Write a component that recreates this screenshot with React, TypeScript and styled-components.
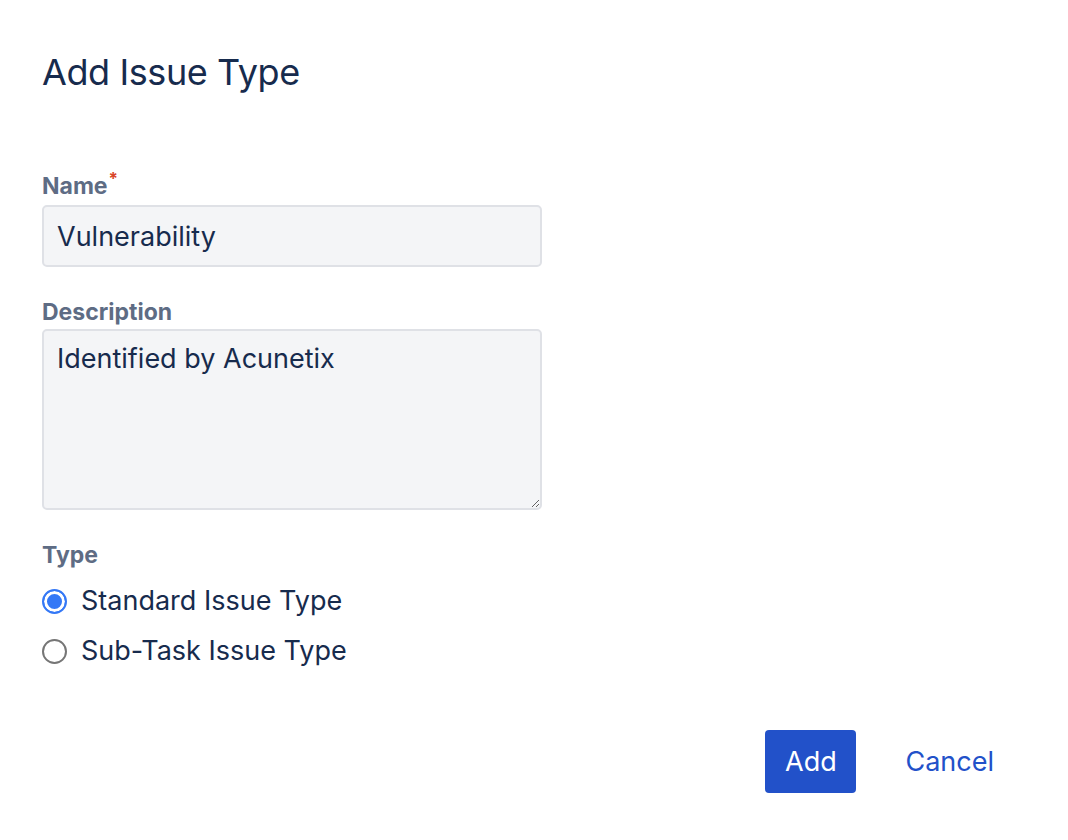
import React, { useState } from 'react';
import styled, { createGlobalStyle } from 'styled-components';

const GlobalStyle = createGlobalStyle`
  html, body {
    margin: 0;
    padding: 0;
    background: #fff;
  }
  body {
    font-family: Inter, 'Noto Sans', 'Liberation Sans', sans-serif;
    color: #172b4d;
  }
`;

const Page = styled.div`
  width: 1068px;
  height: 840px;
  box-sizing: border-box;
  padding: 48px 42px 0 42px;
`;

const Title = styled.h1`
  margin: 0;
  font-size: 36px;
  font-weight: 400;
  line-height: 48px;
  letter-spacing: -0.4px;
  color: #172b4d;
`;

const Form = styled.form`
  margin-top: 76px;
  width: 500px;
  display: flex;
  flex-direction: column;
`;

const Field = styled.div`
  display: flex;
  flex-direction: column;
  & + & {
    margin-top: 31px;
  }
`;

const Label = styled.label`
  font-size: 23px;
  font-weight: 700;
  line-height: 28px;
  color: #5e6c84;
  margin-bottom: 3px;
`;

const Required = styled.span`
  color: #d9462a;
  font-size: 17px;
  position: relative;
  top: -9px;
  margin-left: 1px;
`;

const TextInput = styled.input`
  box-sizing: border-box;
  height: 62px;
  width: 100%;
  padding: 0 13px;
  border: 2px solid #dfe1e6;
  border-radius: 5px;
  background: #f4f5f7;
  font-family: inherit;
  font-size: 27px;
  color: #172b4d;
  outline: none;
`;

const TextArea = styled.textarea`
  box-sizing: border-box;
  height: 181px;
  width: 100%;
  padding: 12px 13px;
  border: 2px solid #dfe1e6;
  border-radius: 5px;
  background: #f4f5f7;
  font-family: inherit;
  font-size: 27px;
  line-height: 32px;
  color: #172b4d;
  outline: none;
  resize: vertical;
`;

const RadioGroup = styled.div`
  display: flex;
  flex-direction: column;
  gap: 16px;
  margin-top: 12px;
`;

const RadioRow = styled.label`
  display: flex;
  align-items: center;
  gap: 14px;
  font-size: 27px;
  line-height: 34px;
  color: #172b4d;
  cursor: pointer;
`;

const RadioDot = styled.span<{ $checked: boolean }>`
  box-sizing: border-box;
  width: 25px;
  height: 25px;
  border-radius: 50%;
  flex: none;
  border: 2px solid ${(p) => (p.$checked ? '#3478f6' : '#767676')};
  background: ${(p) => (p.$checked ? '#3478f6' : '#fff')};
  box-shadow: ${(p) => (p.$checked ? 'inset 0 0 0 3px #fff' : 'none')};
`;

const Footer = styled.div`
  display: flex;
  justify-content: flex-end;
  align-items: center;
  gap: 35px;
  width: 966px;
  margin-top: 62px;
`;

const PrimaryButton = styled.button`
  height: 63px;
  min-width: 91px;
  padding: 0 18px;
  border: none;
  border-radius: 4px;
  background: #2251c9;
  color: #fff;
  font-family: inherit;
  font-size: 27px;
  font-weight: 400;
  cursor: pointer;
`;

const LinkButton = styled.button`
  height: 63px;
  padding: 0 14px;
  border: none;
  background: transparent;
  color: #2251c9;
  font-family: inherit;
  font-size: 27px;
  cursor: pointer;
`;

const types = ['Standard Issue Type', 'Sub-Task Issue Type'];

const App: React.FC = () => {
  const [name, setName] = useState('Vulnerability');
  const [desc, setDesc] = useState('Identified by Acunetix');
  const [type, setType] = useState(0);

  return (
    <>
      <GlobalStyle />
      <Page>
        <Title>Add Issue Type</Title>
        <Form onSubmit={(e) => e.preventDefault()}>
          <Field>
            <Label>
              Name<Required>*</Required>
            </Label>
            <TextInput value={name} onChange={(e) => setName(e.target.value)} />
          </Field>
          <Field>
            <Label>Description</Label>
            <TextArea value={desc} onChange={(e) => setDesc(e.target.value)} />
          </Field>
          <Field>
            <Label>Type</Label>
            <RadioGroup>
              {types.map((t, i) => (
                <RadioRow key={t} onClick={() => setType(i)}>
                  <RadioDot $checked={type === i} />
                  {t}
                </RadioRow>
              ))}
            </RadioGroup>
          </Field>
        </Form>
        <Footer>
          <PrimaryButton>Add</PrimaryButton>
          <LinkButton>Cancel</LinkButton>
        </Footer>
      </Page>
    </>
  );
};

export default App;
